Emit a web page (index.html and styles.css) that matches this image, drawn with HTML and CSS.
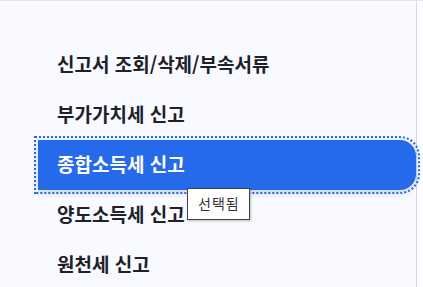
FILE: index.html
```html
<!DOCTYPE html>
<html lang="ko">

<head>
    <meta charset="UTF-8">
    <meta name="viewport" content="width=device-width, initial-scale=1.0">
    <title>신고 메뉴</title>
    <link rel="stylesheet" href="styles.css">
</head>

<body>
    <div class="page">
        <nav class="sidebar">
            <ul class="menu">
                <li class="menu-item">신고서 조회/삭제/부속서류</li>
                <li class="menu-item">부가가치세 신고</li>
                <li class="menu-item now">
                    종합소득세 신고
                    <span class="tip">선택됨</span>
                </li>
                <li class="menu-item">양도소득세 신고</li>
                <li class="menu-item">원천세 신고</li>
            </ul>
        </nav>
    </div>
</body>

</html>
```

FILE: styles.css
```css
html,
body {
    margin: 0;
    padding: 0;
    background-color: #FFF;
    font-family: "Noto Sans CJK KR", "Noto Sans", sans-serif;
}

.page {
    height: 287px;
    border-top: 1px solid #E6E8EC;
    overflow: hidden;
}

.sidebar {
    width: 416px;
    height: 100%;
    padding-top: 39px;
    background-color: #F8FAFF;
    border-right: 1px solid #C9DCFB;
}

.menu {
    list-style: none;
    margin: 0 0 0 38px;
    padding: 0;
}

.menu-item {
    position: relative;
    height: 50px;
    padding: 0 19px;
    line-height: 48px;
    font-size: 19px;
    font-weight: 700;
    color: #1E2128;
    cursor: pointer;
}

.menu-item.now {
    color: #FFF;
    background-color: #256AEA;
    border-radius: 0 16px 16px 0;
    outline: 2px dotted #2368EC;
    outline-offset: 2px;
    box-shadow: 0 2px 8px rgba(0, 0, 0, 0.18);
    z-index: 1;
}

.tip {
    position: absolute;
    top: 48px;
    left: 149px;
    padding: 0 9px 0 10px;
    height: 30px;
    line-height: 29px;
    font-size: 14px;
    font-weight: 400;
    letter-spacing: 1px;
    color: #333;
    background-color: #FFF;
    border: 1px solid #444;
    box-shadow: 1px 1px 2px rgba(0, 0, 0, 0.25);
    white-space: nowrap;
}
```
